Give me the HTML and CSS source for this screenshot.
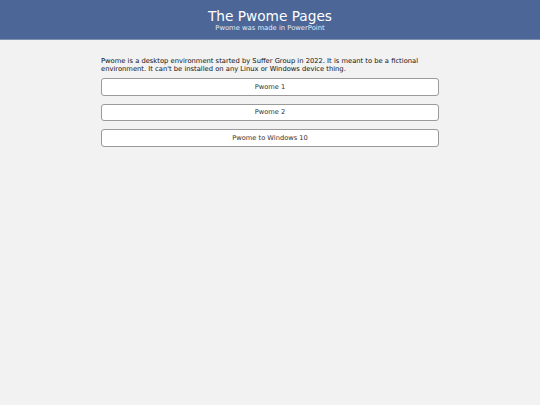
FILE: index.html
```html
<!DOCTYPE html>
<html>
<head>
<meta charset="utf-8">
<link rel="stylesheet" href="styles.css">
</head>
<body>
<header class="header">
  <h1 class="title">The Pwome Pages</h1>
  <p class="subtitle">Pwome was made in PowerPoint</p>
</header>
<main class="content">
  <p class="intro">Pwome is a desktop environment started by Suffer Group in 2022. It is meant to be a fictional environment. It can't be installed on any Linux or Windows device thing.</p>
  <div class="buttons">
    <button class="btn">Pwome 1</button>
    <button class="btn">Pwome 2</button>
    <button class="btn">Pwome to Windows 10</button>
  </div>
</main>
</body>
</html>
```
FILE: styles.css
```css
html, body {
  margin: 0;
  padding: 0;
  background: #f2f2f2;
  font-family: "DejaVu Sans", sans-serif;
}
.header {
  background: #4c6698;
  height: 40px;
  display: flex;
  flex-direction: column;
  align-items: center;
  justify-content: center;
  padding-top: 2px;
  color: #fff;
  border-bottom: 1px solid #7f8fae;
  box-sizing: border-box;
}
.title {
  margin: 0;
  font-weight: normal;
  font-size: 13.7px;
  line-height: 15px;
}
.subtitle {
  margin: 0;
  font-size: 6.8px;
  line-height: 9px;
  color: #e6ebf3;
}
.content {
  width: 338px;
  margin: 0 auto;
  padding-top: 17px;
}
.intro {
  margin: 0 0 5px 0;
  font-size: 6.75px;
  line-height: 8px;
  color: #111;
}
.buttons {
  display: flex;
  flex-direction: column;
  gap: 8px;
}
.btn {
  display: block;
  width: 100%;
  height: 17.5px;
  background: #fff;
  border: 1px solid #9a9a9a;
  border-radius: 3px;
  font-family: "DejaVu Sans", sans-serif;
  font-size: 6.7px;
  color: #333;
  padding: 0;
}
```
